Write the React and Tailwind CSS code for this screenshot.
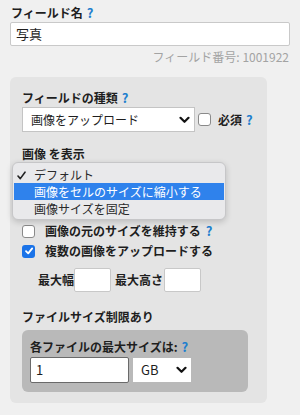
import React from "react";

const Help = () => <span className="text-[#1f7fce] text-[13px] font-bold ml-[4px]">?</span>;

const Chevron = ({ className }) => (
  <svg className={className} width="11" height="8" viewBox="0 0 11 8" fill="none">
    <path d="M1.5 1.8 L5.5 5.8 L9.5 1.8" stroke="#111" strokeWidth="2.2" strokeLinecap="round" strokeLinejoin="round" />
  </svg>
);

export default function App() {
  return (
    <div
      className="w-[300px] h-[415px] bg-[#f0f0f0] px-[10px] pt-[5px] text-[#1e1e1e] overflow-hidden"
      style={{ fontFamily: '"Noto Sans CJK JP", "Noto Sans", sans-serif' }}
    >
      <div className="text-[12px] leading-[15px] font-bold pl-[1px]">
        フィールド名<Help />
      </div>
      <div className="mt-[2px] h-[24px] bg-white border border-[#c9c9c9] rounded-[2px] flex items-center pl-[5px] text-[13px]">
        写真
      </div>
      <div className="mt-[4px] text-right text-[12px] leading-[14px] text-[#a3a3a3] pr-[1px]">
        フィールド番号: 1001922
      </div>

      <div className="mt-[13px] w-[257px] h-[326px] bg-[#e4e4e4] rounded-[6px] px-[12px] pt-[14px]">
        <div className="text-[12px] leading-[14px] font-bold">
          フィールドの種類<Help />
        </div>
        <div className="mt-[2px] flex items-center">
          <div className="w-[173px] h-[25px] bg-white border border-[#c4c4c4] flex items-center justify-between pl-[8px] pr-[4px] text-[12px]">
            <span>画像をアップロード</span>
            <Chevron />
          </div>
          <div className="ml-[3px] w-[13px] h-[13px] bg-white border border-[#8a8a8a] rounded-[3px]" />
          <span className="ml-[7px] text-[12px] font-bold">
            必須<Help />
          </span>
        </div>

        <div className="mt-[15px] text-[12px] leading-[14px] font-bold">画像 を表示</div>
        <div className="relative h-[62px]">
          <div className="absolute top-[18px] left-0 w-[173px] h-[25px] bg-white border border-[#c4c4c4]" />
          <div className="absolute top-[1px] left-[-10px] w-[214px] h-[58px] bg-[#e9e9eb] border border-[#c6c6c8] rounded-[6px] shadow-[0_2px_6px_rgba(0,0,0,0.18)] pt-[4px] text-[12px] leading-[16px] text-[#2a2a2a]">
            <div className="flex items-center h-[16px]">
              <span className="w-[21px] pl-[4px] flex items-center">
                <svg width="9" height="9" viewBox="0 0 9 9" fill="none">
                  <path d="M1 5 L3.3 7.6 L8 1.2" stroke="#222" strokeWidth="1.6" strokeLinecap="round" strokeLinejoin="round" />
                </svg>
              </span>
              <span>デフォルト</span>
            </div>
            <div className="flex items-center h-[17px] bg-[#2f82ec] text-white mx-[1px]">
              <span className="w-[20px]" />
              <span>画像をセルのサイズに縮小する</span>
            </div>
            <div className="flex items-center h-[17px]">
              <span className="w-[21px]" />
              <span>画像サイズを固定</span>
            </div>
          </div>
        </div>

        <div className="flex items-center h-[16px] text-[12px] font-bold">
          <div className="w-[13px] h-[13px] bg-white border border-[#8a8a8a] rounded-[3px]" />
          <span className="ml-[10px]">
            画像の元のサイズを維持する<span className="ml-[1px]"><Help /></span>
          </span>
        </div>
        <div className="mt-[4px] flex items-center h-[16px] text-[12px] font-bold">
          <div className="w-[13px] h-[13px] bg-[#1a73e8] rounded-[3px] flex items-center justify-center">
            <svg width="10" height="10" viewBox="0 0 10 10" fill="none">
              <path d="M2 5.2 L4.2 7.4 L8.2 2.4" stroke="white" strokeWidth="1.8" strokeLinecap="round" strokeLinejoin="round" />
            </svg>
          </div>
          <span className="ml-[10px]">複数の画像をアップロードする</span>
        </div>

        <div className="mt-[9px] flex items-center pl-[16px] text-[12px] font-bold">
          <span>最大幅</span>
          <div className="w-[37px] h-[24px] bg-white border border-[#c8c8c8] rounded-[2px]" />
          <span className="ml-[4px]">最大高さ</span>
          <div className="ml-[1px] w-[37px] h-[24px] bg-white border border-[#c8c8c8] rounded-[2px]" />
        </div>

        <div className="mt-[18px] text-[12px] leading-[14px] font-bold">ファイルサイズ制限あり</div>
        <div className="mt-[6px] w-[226px] h-[62px] bg-[#b9b9b9] rounded-[6px] px-[8px] pt-[10px]">
          <div className="text-[12px] leading-[14px] font-bold">
            各ファイルの最大サイズは:<Help />
          </div>
          <div className="mt-[3px] flex items-center">
            <div className="w-[99px] h-[26px] bg-white border border-[#6a6a6a] rounded-[2px] flex items-center pl-[5px] text-[13px]">
              1
            </div>
            <div className="ml-[4px] w-[58px] h-[24px] bg-white flex items-center justify-between pl-[8px] pr-[4px] text-[13px]">
              <span>GB</span>
              <Chevron />
            </div>
          </div>
        </div>
      </div>
    </div>
  );
}
